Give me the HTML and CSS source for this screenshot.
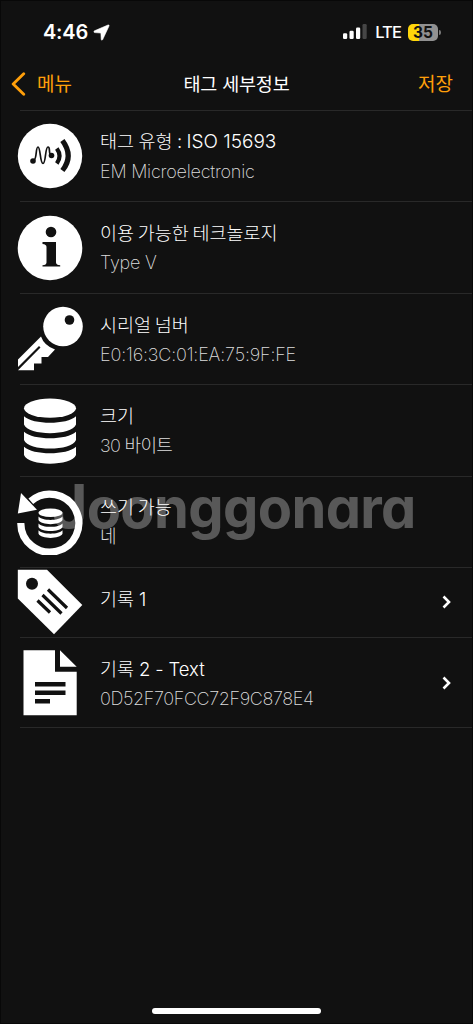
FILE: index.html
```html
<!DOCTYPE html>
<html lang="ko">
<head>
<meta charset="utf-8">
<title>태그 세부정보</title>
<link rel="stylesheet" href="styles.css">
</head>
<body>
<div class="screen">
  <div class="status">
    <div class="status-left">
      <span class="time">4:46</span>
      <svg class="location" width="17" height="17" viewBox="0 0 17 17"><path d="M15 1 1.500 6.800C.6 7.300.7 8.500 1.700 8.600L7.900 9 8.200 15.200C8.300 16.400 9.200 16.400 9.700 15.500L16 2C16.300 1.100 15.800.7 15 1Z" fill="#fff" stroke="#fff" stroke-width=".6"/></svg>
    </div>
    <div class="status-right">
      <svg class="signal" width="24" height="16" viewBox="0 0 24 16"><g fill="#fff"><rect x="0" y="9.3" width="4.2" height="5.7" rx="1.2"/><rect x="6.5" y="6.8" width="4.2" height="8.2" rx="1.2"/><rect x="13" y="3.5" width="4.2" height="11.5" rx="1.2"/></g><rect x="19.5" y="0" width="4.2" height="15" rx="1.2" fill="#464646"/></svg>
      <span class="network">LTE</span>
      <span class="battery"><span class="level">35</span></span><span class="battery-tip"></span>
    </div>
  </div>
  <header class="nav">
    <span class="back"><svg width="15" height="24" viewBox="0 0 15 24"><path d="M12.7 1.8 2.2 12 12.7 22.2" fill="none" stroke="#ff9f0a" stroke-width="2.9" stroke-linecap="round" stroke-linejoin="round"/></svg><span>메뉴</span></span>
    <h1 class="heading">태그 세부정보</h1>
    <span class="save">저장</span>
  </header>
  <main class="list">
    <section class="row">
      <svg class="icon" viewBox="0 0 66 66"><circle cx="33" cy="33" r="32.2" fill="#fff"/><g fill="none" stroke="#111"><path d="M17 37C20 36 18.500 24 21 24S23 40.500 26 40.500 28 24 31 24 30.500 32 35 32.500" stroke-width="1.700"/><path d="M39.800 25.500Q45.300 33 39.800 40.500" stroke-width="4.200"/><path d="M45.400 17.500Q57 33 45.400 47.500" stroke-width="5.200"/></g><circle cx="16" cy="38" r="2.800" fill="#111"/><circle cx="34.500" cy="32.500" r="2.800" fill="#111"/></svg>
      <div class="text"><div class="title type">태그 유형 : <span class="latin">ISO 15693</span></div><div class="sub">EM Microelectronic</div></div>
    </section>
    <section class="row">
      <svg class="icon" viewBox="0 0 66 66"><circle cx="33" cy="33" r="32.300" fill="#fff"/><circle cx="34" cy="17" r="5.300" fill="#111"/><path d="M25.500 27H39V47.500Q39 50 43.200 50.300V51.500H25.500V50.300Q29.500 50 29.500 47.500V32Q29.500 29.300 25.500 29Z" fill="#111"/></svg>
      <div class="text"><div class="title">이용 가능한 테크놀로지</div><div class="sub">Type V</div></div>
    </section>
    <section class="row">
      <svg class="icon" viewBox="0 0 66 66"><g fill="#fff"><circle cx="46" cy="20.500" r="19.800"/><path d="M24 30.500Q27 39.500 38 43.500L31 51H24.500V57.500H17V64.300H1L23.500 41.500 22 40 1 61V53.500Z"/></g><circle cx="52.500" cy="14" r="4.800" fill="#111"/></svg>
      <div class="text"><div class="title">시리얼 넘버</div><div class="sub serial">E0:16:3C:01:EA:75:9F:FE</div></div>
    </section>
    <section class="row">
      <svg class="icon" viewBox="0 0 66 66"><g fill="#fff"><ellipse cx="33" cy="10.200" rx="26" ry="9.600"/><path id="disk" d="M7 18.300C16 27 50 27 59 18.300V26.500C55 38 11 38 7 26.500Z"/><use href="#disk" y="15.400"/><use href="#disk" y="30.500"/></g></svg>
      <div class="text"><div class="title">크기</div><div class="sub korean">30 바이트</div></div>
    </section>
    <section class="row">
      <svg class="icon" viewBox="0 0 66 66"><path d="M3.800 34A29 29 0 1 0 13.800 12.200" fill="none" stroke="#fff" stroke-width="7.200"/><path d="M4 4 .8 24.500 20 20.800Z" fill="#fff"/><g fill="#fff"><ellipse cx="33.500" cy="23.800" rx="12" ry="4.300"/><path id="smalldisk" d="M21.500 27.500C25 32 42 32 45.500 27.500V31C43 36.500 24 36.500 21.500 31Z"/><use href="#smalldisk" y="6.900"/><use href="#smalldisk" y="13.800"/></g></svg>
      <div class="text"><div class="title">쓰기 가능</div><div class="sub korean">네</div></div>
      <div class="watermark"><span class="initial">J</span>oonggonara</div>
    </section>
    <section class="row short">
      <svg class="icon" viewBox="0 0 66 66"><path d="M.8 .8H30L65.300 36 37 65.200 .8 29.500Z" fill="#fff"/><circle cx="15" cy="14.800" r="6" fill="#111"/><path d="M31 20.500 50 39M25.500 26 44.500 44.500M20.500 31.500 33 43.500" stroke="#111" stroke-width="3.200"/></svg>
      <div class="text"><div class="title plain">기록 1</div></div>
      <svg class="chevron" width="10" height="14" viewBox="0 0 10 14"><path d="M1.500 1.500 7 7 1.500 12.500" fill="none" stroke="#fff" stroke-width="2.600"/></svg>
    </section>
    <section class="row">
      <svg class="icon" viewBox="0 0 66 66"><path d="M6.500 .3H38V21.700H59.700V65.300H6.500ZM43 .3 59.700 16.700H43Z" fill="#fff"/><path d="M18 34.300H48.500M18 42.800H48.500M18 51.300H33" stroke="#111" stroke-width="4.600"/></svg>
      <div class="text"><div class="title plain">기록 2 - Text</div><div class="sub hex">0D52F70FCC72F9C878E4</div></div>
      <svg class="chevron" width="10" height="14" viewBox="0 0 10 14"><path d="M1.500 1.500 7 7 1.500 12.500" fill="none" stroke="#fff" stroke-width="2.600"/></svg>
    </section>
  </main>
  <div class="home-indicator"></div>
</div>
</body>
</html>
```

FILE: styles.css
```css
* { box-sizing: border-box; }
body { margin: 0; background: #111; color: #fff; font-family: Inter, "Noto Sans CJK KR", sans-serif; }
.screen { width: 473px; height: 1024px; background: #111; overflow: hidden; display: flex; flex-direction: column; border: 1px solid #080808; }
.status { height: 57px; flex: none; display: flex; justify-content: space-between; padding: 5px 31px 0 42px; align-items: center; }
.status-left, .status-right { display: flex; align-items: center; }
.time { font-size: 20px; font-weight: 600; line-height: 24px; letter-spacing: -0.2px; }
.location { margin-left: 5px; }
.signal { margin-right: 8px; }
.network { font-size: 16.500px; font-weight: 500; letter-spacing: -0.900px; line-height: 24px; }
.battery { margin-left: 7px; width: 30px; height: 17px; border-radius: 5px; background: linear-gradient(90deg, #ffd60a 11px, #919191 11px); color: #111; display: flex; align-items: center; justify-content: center; }
.level { font-size: 15.500px; font-weight: 700; line-height: 17px; }
.battery-tip { width: 2px; height: 5px; margin-left: 1px; border-radius: 0 2px 2px 0; background: #777; }
.nav { height: 52px; flex: none; display: grid; grid-template-columns: 1fr auto 1fr; align-items: center; padding: 0 19px 0 10px; font-size: 19px; font-weight: 400; }
.back { display: flex; align-items: center; gap: 11px; color: #ff9f0a; }
.heading { margin: 0; font-size: 18.500px; font-weight: 400; letter-spacing: -0.2px; padding-left: 9px; }
.save { justify-self: end; color: #ff9f0a; }
.back span, .save { line-height: 26px; padding-top: 2px; }
.heading { line-height: 28px; }
.list { flex: none; display: flex; flex-direction: column; }
.row { position: relative; height: 91.450px; display: flex; align-items: center; padding-left: 16px; padding-right: 20px; }
.row::before { content: ""; position: absolute; top: 0; left: 19px; right: 0; height: 1px; background: #292929; }
.row:last-child::after { content: ""; position: absolute; bottom: 0; left: 19px; right: 0; height: 1px; background: #292929; }
.short { height: 69.800px; }
.icon { width: 66px; height: 66px; flex: none; margin-top: 1px; }
.text { position: relative; z-index: 2; margin-left: 17px; padding-top: 2px; flex: 1; white-space: nowrap; }
.title { font-size: 18.500px; font-weight: 300; line-height: 30px; word-spacing: -1.500px; }
.type { word-spacing: -0.800px; }
.latin { font-size: 19px; word-spacing: 0; }
.plain { word-spacing: -0.300px; }
.sub { font-size: 18px; font-weight: 200; line-height: 30px; color: #ddd; letter-spacing: -0.220px; }
.serial { letter-spacing: -0.170px; }
.korean { letter-spacing: -0.700px; }
.hex { letter-spacing: -0.380px; }
.short .text { padding-top: 0; padding-bottom: 6px; }
.short .icon { margin-top: 0; }
.chevron { flex: none; margin-left: auto; }
.watermark { position: absolute; left: 60px; top: 0; font-size: 56px; line-height: 60px; font-weight: 650; letter-spacing: -0.650px; font-feature-settings: "cv11"; color: rgba(255, 255, 255, 0.3); z-index: 1; }
.initial { font-size: 61px; line-height: 1; letter-spacing: -10px; margin-left: -9px; margin-right: 9px; }
.home-indicator { width: 169px; height: 6px; border-radius: 3px; background: #fff; margin: auto auto 9px 151px; flex: none; }
```
